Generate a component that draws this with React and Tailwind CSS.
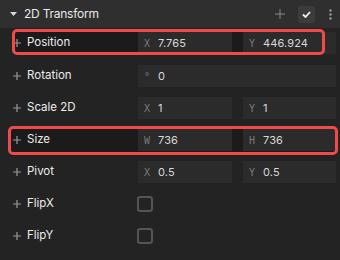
import React from 'react';

function Field({ prefix, value, className = '' }) {
  return (
    <div className={`h-[22px] bg-[#2b2b2b] flex items-center pl-[6px] ${className}`}>
      <span className="w-[14px] text-[10px] text-[#7a7a7a] font-['DejaVu_Sans_Mono',monospace]">{prefix}</span>
      <span className="text-[11px] tracking-[0.01em] text-[#d8d8d8]">{value}</span>
    </div>
  );
}

function Plus() {
  return (
    <svg width="8" height="8" viewBox="0 0 8 8">
      <path d="M4 0v8M0 4h8" stroke="#9a9a9a" strokeWidth="1.2" />
    </svg>
  );
}

function Row({ label, children }) {
  return (
    <div className="h-[32px] flex items-center">
      <span className="w-[14px] ml-[13px] flex items-center"><Plus /></span>
      <span className="w-[111px] text-[11.5px] text-[#ececec]">{label}</span>
      {children}
    </div>
  );
}

function Pair({ a, b }) {
  return (
    <div className="flex gap-[11px]">
      <Field prefix={a[0]} value={a[1]} className="w-[94px]" />
      <Field prefix={b[0]} value={b[1]} className="w-[93px]" />
    </div>
  );
}

function Checkbox() {
  return <div className="ml-[-1px] w-[16px] h-[16px] rounded-[3px] border-2 border-[#555]" />;
}

export default function App() {
  return (
    <div className="relative w-[340px] h-[260px] bg-[#232323] overflow-hidden font-['Inter',sans-serif]">
      <div className="h-[28px] bg-[#2f2f2f] flex items-center pl-[10px] pr-[8px]">
        <svg width="7" height="4" viewBox="0 0 7 4" className="mr-[7px]">
          <path d="M0 0h7L3.5 4z" fill="#d8d8d8" />
        </svg>
        <span className="text-[12px] tracking-[-0.02em] text-[#e8e8e8]">2D Transform</span>
        <div className="ml-auto flex items-center">
          <svg width="10" height="10" viewBox="0 0 10 10" className="mr-[13px]">
            <path d="M5 0v10M0 5h10" stroke="#8a8a8a" strokeWidth="1" />
          </svg>
          <div className="w-[17px] h-[17px] rounded-[3px] bg-[#3c3c3c] flex items-center justify-center mr-[14px]">
            <svg width="9" height="7" viewBox="0 0 9 7">
              <path d="M1 3.5l2.5 2.5L8 1" stroke="#f2f2f2" strokeWidth="1.8" fill="none" />
            </svg>
          </div>
          <svg width="3" height="11" viewBox="0 0 3 11">
            <circle cx="1.5" cy="1.5" r="1.2" fill="#9a9a9a" />
            <circle cx="1.5" cy="5.5" r="1.2" fill="#9a9a9a" />
            <circle cx="1.5" cy="9.5" r="1.2" fill="#9a9a9a" />
          </svg>
        </div>
      </div>

      <div className="absolute left-[12px] top-[29px] w-[313px] h-[26px] bg-[#1b1b1b] rounded-[5px] z-0" />
      <div className="absolute left-[8px] top-[126px] w-[330px] h-[29px] bg-[#1b1b1b] rounded-[5px] z-0" />

      <div className="relative z-10 -mt-[1px]">
        <Row label="Position">
          <Pair a={['X', '7.765']} b={['Y', '446.924']} />
        </Row>
      </div>
      <div className="relative z-10 mt-[1px]">
        <Row label="Rotation">
          <Field prefix="°" value="0" className="w-[198px]" />
        </Row>
        <Row label="Scale 2D">
          <Pair a={['X', '1']} b={['Y', '1']} />
        </Row>
        <Row label="Size">
          <Pair a={['W', '736']} b={['H', '736']} />
        </Row>
        <Row label="Pivot">
          <Pair a={['X', '0.5']} b={['Y', '0.5']} />
        </Row>
        <Row label="FlipX">
          <Checkbox />
        </Row>
        <Row label="FlipY">
          <Checkbox />
        </Row>
      </div>

      <div className="absolute left-[12px] top-[29px] w-[313px] h-[26px] border-[3px] border-[#f04a4a] rounded-[5px] z-20" />
      <div className="absolute left-[8px] top-[126px] w-[330px] h-[29px] border-[3px] border-[#f04a4a] rounded-[5px] z-20" />
    </div>
  );
}
